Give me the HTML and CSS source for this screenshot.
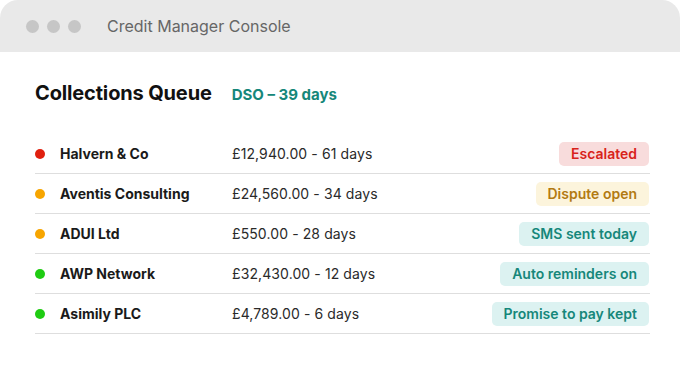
FILE: index.html
```html
<!DOCTYPE html>
<html lang="en">

<head>
    <meta charset="UTF-8">
    <meta name="viewport" content="width=device-width, initial-scale=1.0">
    <title>Credit Manager Console</title>
    <link rel="stylesheet" href="styles.css">
</head>

<body>
    <div class="window">
        <!-- 상단 타이틀바 -->
        <div class="titlebar">
            <div class="dots">
                <span></span><span></span><span></span>
            </div>
            <div class="wtitle">Credit Manager Console</div>
        </div>

        <div class="content">
            <div class="head">
                <h1>Collections Queue</h1>
                <span class="dso">DSO – 39 days</span>
            </div>

            <ul class="queue">
                <li class="row">
                    <span class="dot red"></span>
                    <span class="name">Halvern &amp; Co</span>
                    <span class="amt">£12,940.00 - 61 days</span>
                    <span class="badge esc">Escalated</span>
                </li>
                <li class="row">
                    <span class="dot amber"></span>
                    <span class="name">Aventis Consulting</span>
                    <span class="amt">£24,560.00 - 34 days</span>
                    <span class="badge disp">Dispute open</span>
                </li>
                <li class="row">
                    <span class="dot amber"></span>
                    <span class="name">ADUI Ltd</span>
                    <span class="amt">£550.00 - 28 days</span>
                    <span class="badge ok">SMS sent today</span>
                </li>
                <li class="row">
                    <span class="dot green"></span>
                    <span class="name">AWP Network</span>
                    <span class="amt">£32,430.00 - 12 days</span>
                    <span class="badge ok">Auto reminders on</span>
                </li>
                <li class="row">
                    <span class="dot green"></span>
                    <span class="name">Asimily PLC</span>
                    <span class="amt">£4,789.00 - 6 days</span>
                    <span class="badge ok">Promise to pay kept</span>
                </li>
            </ul>
        </div>
    </div>
</body>

</html>
```

FILE: styles.css
```css
html,
body {
    margin: 0;
    padding: 0;
}

body {
    background-color: #fff;
    font-family: Inter, "Liberation Sans", sans-serif;
    color: #1a1a1a;
}

/* 창 전체 */
.window {
    width: 680px;
    height: 371px;
    background-color: #fff;
    border-radius: 18px 18px 0 0;
    overflow: hidden;
}

/* 타이틀바 */
.titlebar {
    display: flex;
    align-items: center;
    height: 52px;
    padding-left: 26px;
    background-color: #e9e9e9;
}

.dots {
    display: flex;
    gap: 8px;
}

.dots span {
    width: 13px;
    height: 13px;
    border-radius: 50%;
    background-color: #c6c6c6;
}

.wtitle {
    margin-left: 26px;
    font-size: 16px;
    color: #666;
}

/* 본문 */
.content {
    padding: 29px 30px 0 35px;
}

.head {
    display: flex;
    align-items: baseline;
    gap: 20px;
    height: 53px;
}

.head h1 {
    margin: 0;
    font-size: 20px;
    font-weight: 700;
    letter-spacing: -0.15px;
    color: #111;
}

.dso {
    font-size: 15px;
    font-weight: 700;
    color: #16877a;
}

/* 목록 */
.queue {
    margin: 0;
    padding: 0;
    list-style: none;
}

.row {
    display: flex;
    align-items: center;
    height: 39px;
    border-bottom: 1px solid #dedede;
    font-size: 14px;
}

.dot {
    width: 10px;
    height: 10px;
    border-radius: 50%;
    margin-right: 15px;
}

.red { background-color: #e0200f; }
.amber { background-color: #f7a500; }
.green { background-color: #1fcc12; }

.name {
    width: 172px;
    font-weight: 700;
    color: #1a1a1a;
}

.amt {
    flex: 1;
    color: #2a2a2a;
    letter-spacing: 0.1px;
}

/* 상태 뱃지 */
.badge {
    height: 24px;
    line-height: 24px;
    padding: 0 12px;
    border-radius: 5px;
    font-weight: 600;
    margin-right: 1px;
}

.esc {
    background-color: #f8dcdc;
    color: #d8231a;
}

.disp {
    background-color: #fcf4dc;
    color: #b27a12;
}

.ok {
    background-color: #dcf2f1;
    color: #16877a;
}
```
